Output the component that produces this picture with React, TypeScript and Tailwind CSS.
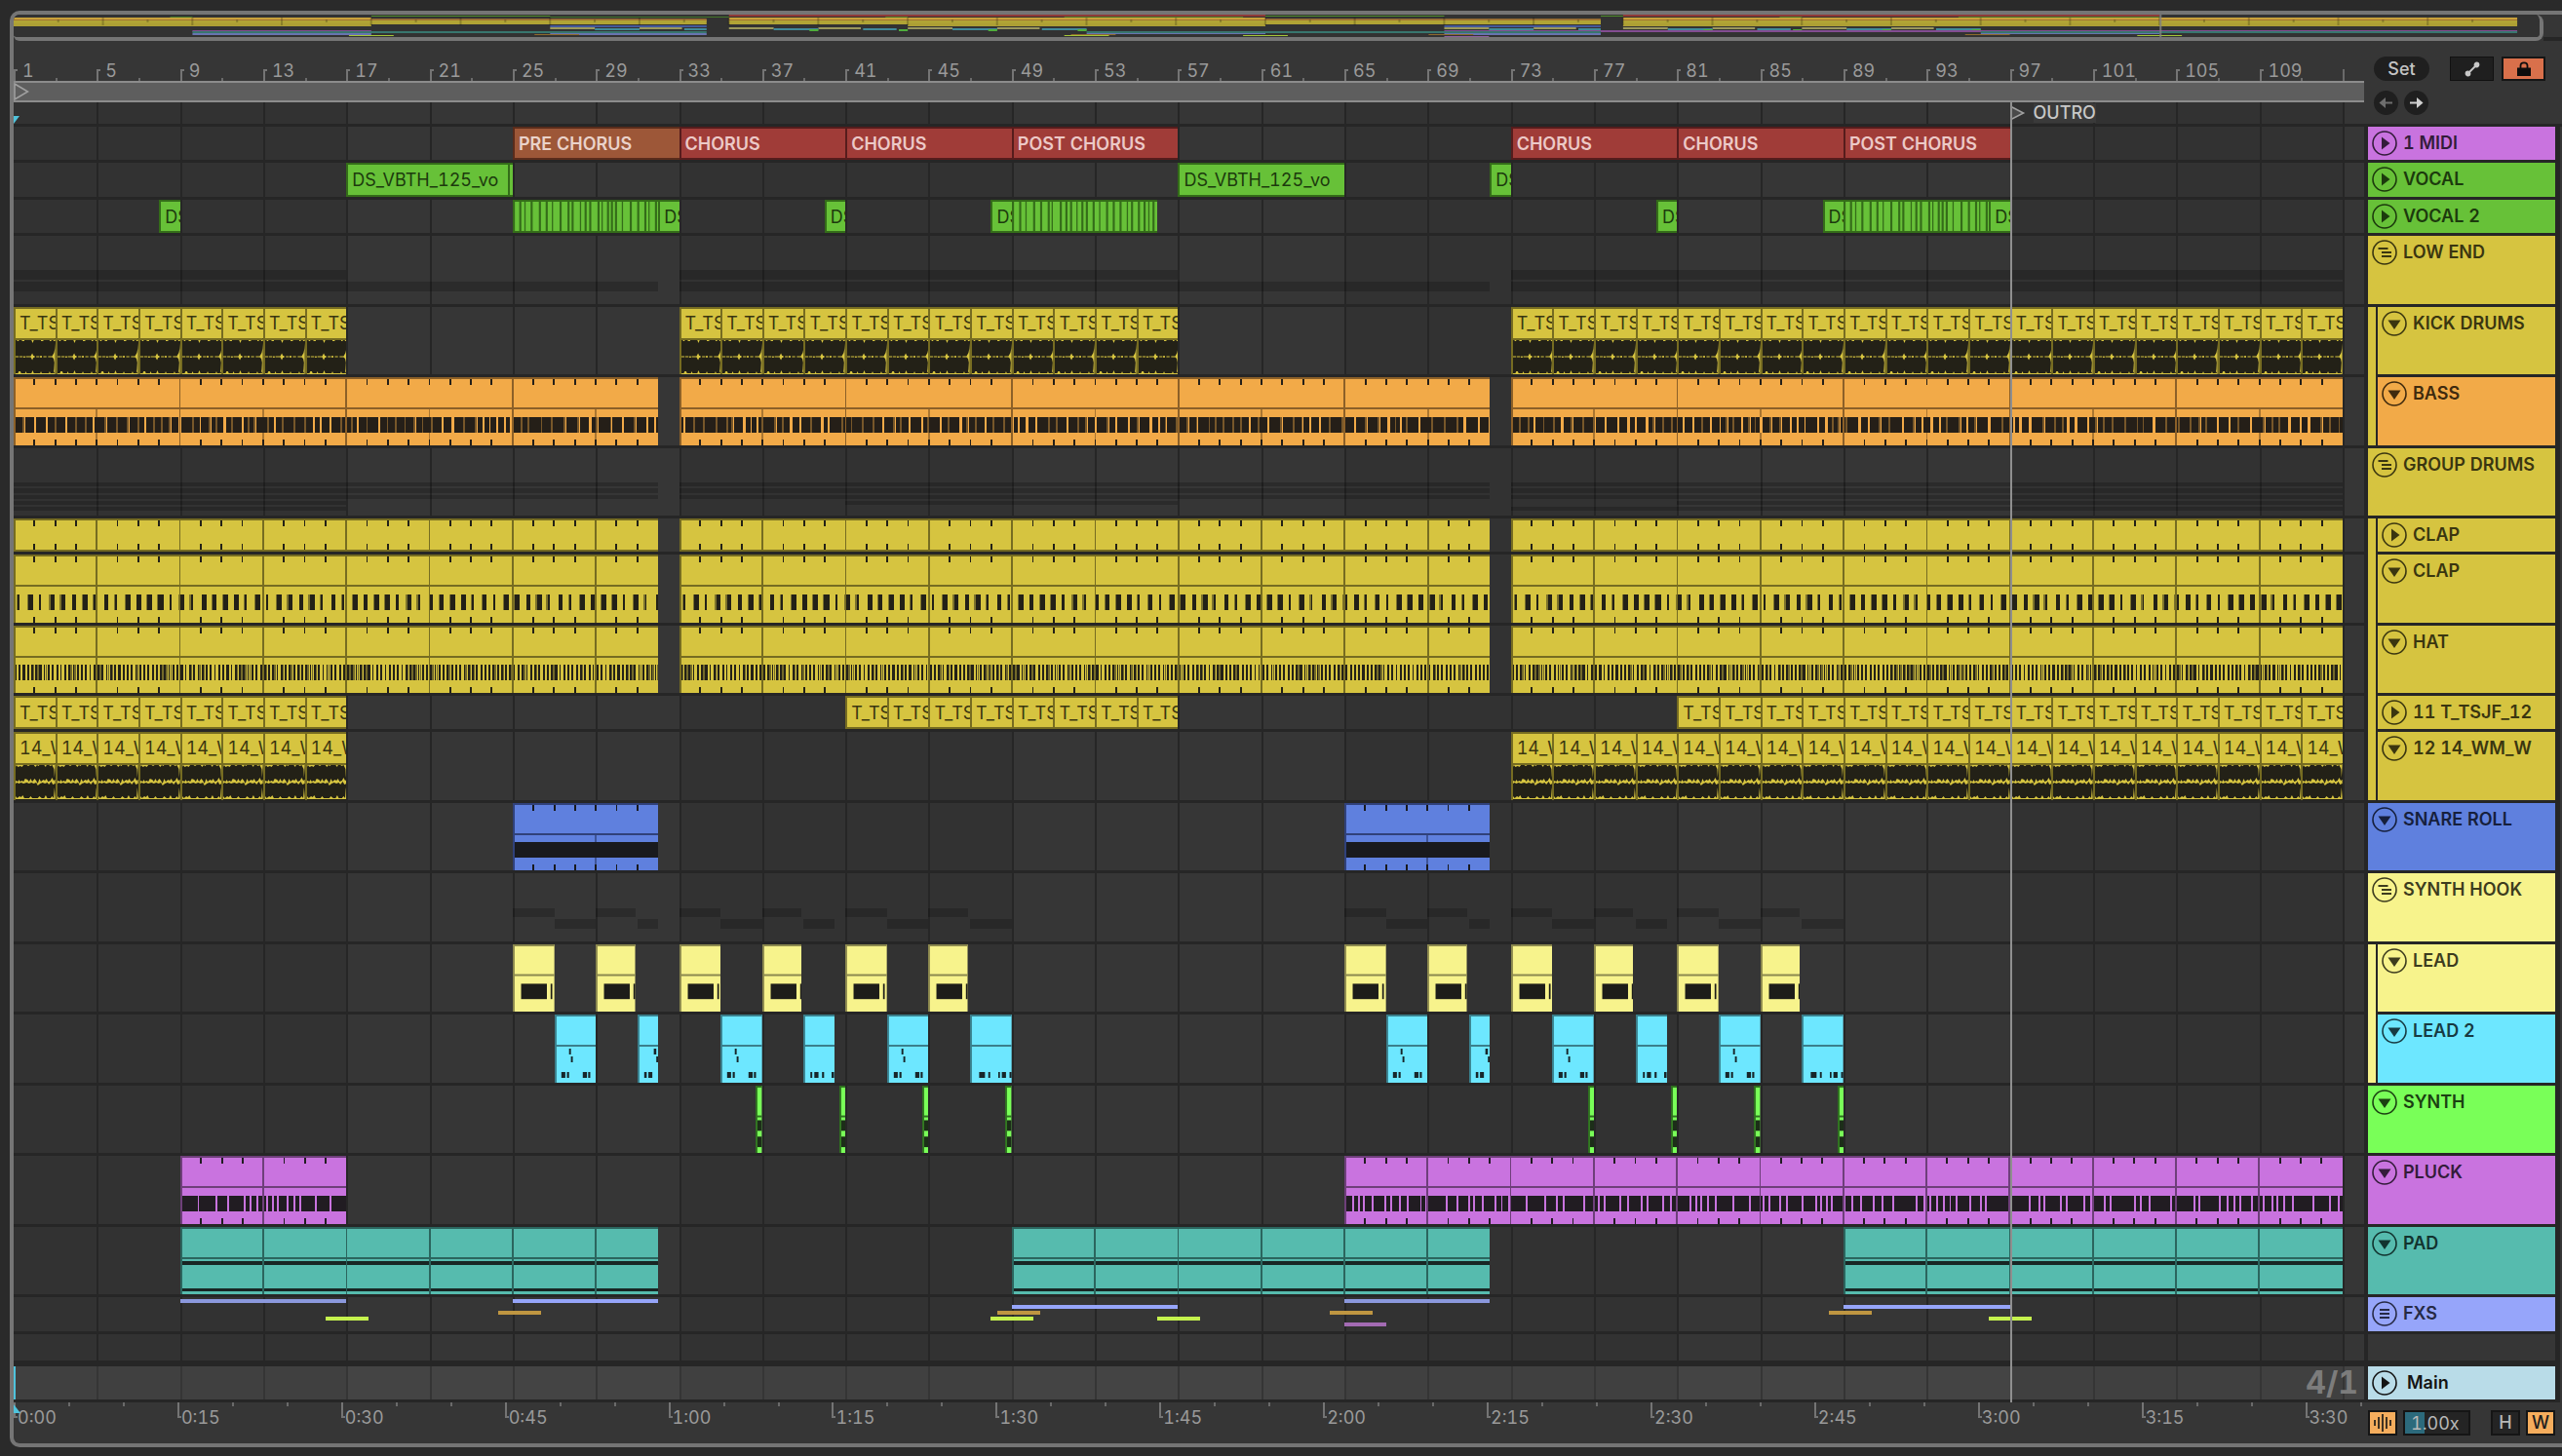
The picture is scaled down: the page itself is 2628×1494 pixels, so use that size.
import React from "react";

const SPAN = 113.04;
const SECONDS = 215.4;
const OVERVIEW_SPAN = 113;

const at = (bar: number) => `${((bar - 1) / SPAN) * 100}%`;
const wide = (bars: number) => `${(bars / SPAN) * 100}%`;

type Range = [number, number];
type Tone = "yellow" | "orange" | "green" | "blue" | "cream" | "cyan" | "lime" | "violet" | "teal" | "rust" | "red";

const TONES: Record<Tone, { clip: string; fill: string; dark: string; note: string }> = {
  yellow: { clip: "bg-[#d6c440] border-[#766c21] text-[#3a3610]", fill: "#d6c440", dark: "#766c21", note: "#232117" },
  orange: { clip: "bg-[#f2aa48] border-[#8c6028] text-[#3f2a0e]", fill: "#f2aa48", dark: "#8c6028", note: "#251f18" },
  green: { clip: "bg-[#67c138] border-[#346c19] text-[#1c3a0d]", fill: "#67c138", dark: "#346c19", note: "#1c3a0d" },
  blue: { clip: "bg-[#5f80de] border-[#30417a] text-[#161f3c]", fill: "#5f80de", dark: "#30417a", note: "#191a1e" },
  cream: { clip: "bg-[#f7f38c] border-[#8b884e] text-[#3d3c1e]", fill: "#f7f38c", dark: "#8b884e", note: "#1d1d19" },
  cyan: { clip: "bg-[#6de7ff] border-[#3a7f8c] text-[#173a42]", fill: "#6de7ff", dark: "#3a7f8c", note: "#17262a" },
  lime: { clip: "bg-[#79ff58] border-[#2f7020] text-[#1b4012]", fill: "#79ff58", dark: "#2f7020", note: "#1c2e18" },
  violet: { clip: "bg-[#c973df] border-[#6e3f7a] text-[#331c3a]", fill: "#c973df", dark: "#6e3f7a", note: "#211c22" },
  teal: { clip: "bg-[#56bbae] border-[#2b655e] text-[#12332f]", fill: "#56bbae", dark: "#2b655e", note: "#182624" },
  rust: { clip: "bg-[#9d5738] border-[#5a2c1b] text-[#ead2ca]", fill: "#9d5738", dark: "#5a2c1b", note: "#000" },
  red: { clip: "bg-[#a03c38] border-[#561c1c] text-[#ecc9c7]", fill: "#a03c38", dark: "#561c1c", note: "#000" },
};

function sequence(seed: number) {
  let s = seed;
  return () => {
    s = (s * 1103515245 + 12345) % 2147483648;
    return s / 2147483648;
  };
}

/* ---------- clips ---------- */

function Clip({ from, to, tone, label, children }: { from: number; to: number; tone: Tone; label?: string; children?: React.ReactNode }) {
  return (
    <div
      className={`absolute inset-y-0 overflow-hidden border-t-2 border-l-2 ${TONES[tone].clip}`}
      style={{ left: at(from), width: wide(to - from) }}
    >
      {label && <div className="h-[30px] whitespace-nowrap pl-1 text-lg leading-[30px]">{label}</div>}
      {children}
    </div>
  );
}

function LabelClip({ from, to, tone, label, bold }: { from: number; to: number; tone: Tone; label?: string; bold?: boolean }) {
  return (
    <div
      className={`absolute inset-y-0 overflow-hidden border-y-2 border-l-2 ${bold ? "font-semibold" : ""} ${TONES[tone].clip}`}
      style={{ left: at(from), width: wide(to - from) }}
    >
      <div className="whitespace-nowrap pl-1 text-lg leading-8">{label}</div>
    </div>
  );
}

function Slices({ from, to, seed }: { from: number; to: number; seed: number }) {
  const next = sequence(seed);
  const lines: number[] = [];
  for (let x = 0; x < (to - from) * 100; ) {
    lines.push(x);
    x += 18 + next() * 22;
  }
  return (
    <div className="absolute inset-y-0 border-y-2 border-[#346c19] bg-[#67c138]" style={{ left: at(from), width: wide(to - from) }}>
      <svg className="block h-full w-full" viewBox={`0 0 ${(to - from) * 100} 30`} preserveAspectRatio="none" aria-hidden="true">
        {lines.map((x, i) => (
          <rect key={i} x={x} y="0" width={i % 4 === 2 ? 6 : 10} height="30" fill="#346c19" />
        ))}
      </svg>
    </div>
  );
}

type Pattern = "bass" | "clap" | "hat" | "solid" | "pluck";

function patternNotes(kind: Pattern, bars: number, seed: number) {
  const next = sequence(seed);
  const out: [number, number, number][] = [];
  const end = bars * 100;
  if (kind === "clap") {
    for (let x = 20, i = 0; x < end; x += 52, i++) {
      const w = [10, 20, 9, 22, 20, 22, 24][i % 7];
      out.push([x, w, 1]);
      if (i % 3 !== 2) out.push([x - 6, 6, 0.5]);
    }
  } else if (kind === "hat") {
    for (let x = 4; x < end; x += 20) {
      const r = next();
      out.push([x, r > 0.6 ? 10 : 8, 1]);
      if (r < 0.35) out.push([x + 9, 7, 0.55]);
    }
  } else if (kind === "bass") {
    for (let x = 0; x < end; ) {
      const w = 16 + next() * 38;
      out.push([x, w, 1]);
      out.push([x + w, 9, next() > 0.4 ? 0.6 : 0]);
      x += w + 9 + (next() > 0.6 ? 4 : 0);
    }
  } else if (kind === "pluck") {
    for (let x = 0; x < end; ) {
      const w = 14 + next() * next() * 120;
      out.push([x, w, 1]);
      x += w + 9;
    }
  } else {
    out.push([0, end, 1]);
  }
  return out;
}

function MidiClip({ from, to, tone, kind, segment, seed, short }: { from: number; to: number; tone: Tone; kind?: Pattern; segment: number; seed: number; short?: boolean }) {
  const t = TONES[tone];
  const bars = to - from;
  const h = short ? 34 : 70;
  const ticks: number[] = [];
  for (let b = 1; b < bars; b++) if (b % segment !== 0) ticks.push(b);
  const splits: number[] = [];
  for (let b = segment; b < bars; b += segment) splits.push(b);
  const halves: number[] = [];
  for (let b = 4; b < bars; b += 4) if (b % segment !== 0) halves.push(b);
  return (
    <div className="absolute inset-y-0" style={{ left: at(from), width: wide(bars) }}>
      <svg className="block h-full w-full" viewBox={`0 0 ${bars * 100} ${h}`} preserveAspectRatio="none" shapeRendering="crispEdges" aria-hidden="true">
        <rect width={bars * 100} height={h} fill={t.fill} />
        {!short && <rect y="31" width={bars * 100} height="2" fill={t.dark} />}
        {halves.map((b) => (
          <rect key={b} x={b * 100 - 5} y="33" width="9" height="37" fill={t.dark} opacity="0.7" />
        ))}
        {kind && <rect y="41" width={bars * 100} height="16" fill={t.fill} />}
        {kind &&
          patternNotes(kind, bars, seed).map(([x, w, o], i) => (
            <rect key={i} x={x} y="41" width={Math.min(w, bars * 100 - x)} height="16" fill={t.note} opacity={o} />
          ))}
        {splits.map((b) => (
          <rect key={b} x={b * 100 - 5} y="0" width="9" height={h} fill={t.dark} />
        ))}
        {ticks.map((b) => (
          <g key={b} fill={t.note}>
            <rect x={b * 100 - 5} y="2" width="9" height="6" />
            <rect x={b * 100 - 5} y={short ? 26 : 64} width="9" height="6" />
          </g>
        ))}
        <rect width={bars * 100} height="2" fill={t.dark} />
        {short && <rect y="32" width={bars * 100} height="2" fill={t.dark} />}
        <rect width="9" height={h} fill={t.dark} />
      </svg>
    </div>
  );
}

const KICK_WAVE =
  "M0 17.5H8V18.5H0ZM10 17.5H18V18.5H10ZM20 17.5H24V19H20ZM26 17.5H38L42 14.5L45 17H48V19H45L42 21.5L38 18.5H26ZM52 17.5H60V18.5H52ZM62 17H66V19H62ZM70 17.5H78V18.5H70ZM82 17.5H92L97 14L99 10L100 4V36H99L97 33L95 36L97 31L98 24L96 20L92 18.5H82ZM0 0H100V2H96L95 1H90V2H86V1H70V2H64V1H46L43 4L40 1H22V2H16V1H8V2H4V1H0ZM0 35H6L8 33H12L14 35H24L26 33L28 35H40L43 32L46 35H62L64 33L66 35H84L86 33L88 35H100V36H0Z";
const LOOP_WAVE =
  "M0 17L6 18L8 16L12 18L16 17L20 18L24 15L30 16L34 18L38 15L42 18L48 15L52 17L56 20L60 15L64 18L70 16L74 17L78 15L82 18L88 17L92 14L96 17L100 16V20L94 21L90 18L84 21L80 19L74 20L68 19L62 20L56 22L52 19L46 20L40 19L34 20L28 19L20 20L14 19L8 20L4 19L0 20ZM0 0H100V2L98 14L97 5L92 1L88 2L84 1H78L76 3L72 1H60L58 2L54 1L50 3L46 1H36L32 2L28 1H20L16 3L12 2L6 3L2 1L0 3ZM0 36V33L4 35L10 33L14 34L18 32L22 35H34L38 33L42 35H56L60 33L66 35H72L76 32L80 35H88L92 33L96 35L98 24L100 34V36Z";

function WaveClips({ ranges, label, wave, flat }: { ranges: Range[]; label: string; wave?: string; flat?: boolean }) {
  const cells: number[] = [];
  ranges.forEach(([a, b]) => {
    for (let x = a; x < b; x += 2) cells.push(x);
  });
  return (
    <>
      {cells.map((bar) =>
        flat ? (
          <LabelClip key={bar} from={bar} to={bar + 2} tone="yellow" label={label} />
        ) : (
          <Clip key={bar} from={bar} to={bar + 2} tone="yellow" label={label}>
            <svg className="block h-[38px] w-full bg-[#232117]" viewBox="0 0 100 38" preserveAspectRatio="none" aria-hidden="true">
              <path d={wave} fill="#d6c440" transform="translate(0 1)" />
              <rect width="100" height="2" fill="#766c21" />
            </svg>
          </Clip>
        ),
      )}
    </>
  );
}

type Note = [number, number, number, number];

function NoteClip({ from, to, tone, notes }: { from: number; to: number; tone: Tone; notes: Note[] }) {
  const t = TONES[tone];
  const bars = to - from;
  return (
    <div className="absolute inset-y-0" style={{ left: at(from), width: wide(bars) }}>
      <svg className="block h-full w-full" viewBox={`0 0 ${bars * 100} 70`} preserveAspectRatio="none" aria-hidden="true">
        <rect width={bars * 100} height="70" fill={t.fill} />
        <rect y="31" width={bars * 100} height="2" fill={t.dark} />
        {notes.map(([a, b, y, h], i) => (
          <rect key={i} x={a} y={y} width={b - a} height={h} fill={t.note} />
        ))}
        <rect width={bars * 100} height="2" fill={t.dark} />
        <rect width="9" height="70" fill={t.dark} />
      </svg>
    </div>
  );
}

const LEAD_NOTES: Note[] = [
  [40, 164, 41, 16],
  [182, 190, 41, 16],
];
const LEAD2_A: Note[] = [
  [69, 78, 35, 6],
  [78, 87, 43, 6],
  [32, 51, 59, 6],
  [59, 69, 59, 6],
  [135, 155, 59, 6],
  [161, 171, 59, 6],
];
const LEAD2_B: Note[] = [
  [78, 90, 35, 6],
  [90, 100, 43, 6],
  [32, 44, 59, 6],
  [52, 71, 59, 6],
];
const LEAD2_C: Note[] = [
  [34, 43, 59, 6],
  [53, 73, 59, 6],
  [90, 100, 59, 6],
  [136, 148, 59, 6],
];
const LEAD2_D: Note[] = [
  [44, 72, 59, 6],
  [88, 97, 59, 6],
  [136, 144, 59, 6],
  [153, 173, 59, 6],
  [190, 200, 59, 6],
];
const SYNTH_NOTES: Note[] = [
  [9, 30, 36, 11],
  [9, 30, 53, 11],
];

function PadClip({ from, to }: { from: number; to: number }) {
  const t = TONES.teal;
  const bars = to - from;
  const lines: number[] = [];
  for (let b = 4; b < bars; b += 4) lines.push(b);
  return (
    <div className="absolute inset-y-0" style={{ left: at(from), width: wide(bars) }}>
      <svg className="block h-full w-full" viewBox={`0 0 ${bars * 100} 69`} preserveAspectRatio="none" shapeRendering="crispEdges" aria-hidden="true">
        <rect width={bars * 100} height="69" fill={t.fill} />
        <rect y="31" width={bars * 100} height="2" fill={t.dark} />
        <rect y="35" width={bars * 100} height="4" fill={t.note} />
        <rect y="63" width={bars * 100} height="3" fill={t.note} />
        {lines.map((b) => (
          <rect key={b} x={b * 100 - 5} width="9" height="69" fill={t.dark} />
        ))}
        <rect width={bars * 100} height="2" fill={t.dark} />
        <rect width="9" height="69" fill={t.dark} />
      </svg>
    </div>
  );
}

function Shadow({ ranges, top, tall }: { ranges: Range[]; top: string; tall: string }) {
  return (
    <>
      {ranges.map(([a, b]) => (
        <div key={a} className={`absolute bg-black/20 ${top} ${tall}`} style={{ left: at(a), width: wide(b - a) }} />
      ))}
    </>
  );
}

function Dash({ from, to, look }: { from: number; to: number; look: string }) {
  return <div className={`absolute h-1 ${look}`} style={{ left: at(from), width: wide(to - from) }} />;
}

/* ---------- arrangement data ---------- */

const FULL: Range[] = [[1, 32], [33, 72], [73, 113]];
const KICK: Range[] = [[1, 17], [33, 57], [73, 113]];
const TSJF: Range[] = [[1, 17], [41, 57], [81, 113]];
const WM: Range[] = [[1, 17], [73, 113]];
const LEAD: Range[] = [25, 29, 33, 37, 41, 45, 65, 69, 73, 77, 81, 85].map((b) => [b, b + (b % 8 === 5 ? 1.9 : 2)] as Range);
const LEAD2: [number, number, Note[]][] = [
  [27, 29, LEAD2_A],
  [31, 32, LEAD2_B],
  [35, 37, LEAD2_A],
  [39, 40.5, LEAD2_C],
  [43, 45, LEAD2_A],
  [47, 49, LEAD2_D],
  [67, 69, LEAD2_A],
  [71, 72, LEAD2_B],
  [75, 77, LEAD2_A],
  [79, 80.5, LEAD2_C],
  [83, 85, LEAD2_A],
  [87, 89, LEAD2_D],
];
const SYNTH = [37, 41, 45, 49, 77, 81, 85, 89];
const PLUCK: Range[] = [[9, 17], [65, 113]];
const PAD: Range[] = [[9, 32], [49, 72], [89, 113]];
const SECTIONS: [number, number, Tone, string][] = [
  [25, 33, "rust", "PRE CHORUS"],
  [33, 41, "red", "CHORUS"],
  [41, 49, "red", "CHORUS"],
  [49, 57, "red", "POST CHORUS"],
  [73, 81, "red", "CHORUS"],
  [81, 89, "red", "CHORUS"],
  [89, 97, "red", "POST CHORUS"],
];

const midiRow = (tone: Tone, ranges: Range[], segment: number, kind?: Pattern, short?: boolean) =>
  ranges.map(([a, b]) => <MidiClip key={a} from={a} to={b} tone={tone} segment={segment} kind={kind} seed={a * 37 + 11} short={short} />);

type Fold = "closed" | "open" | "group" | "list";
type Track = { name: string; size: string; head: string; fold: Fold; nested?: string; content: React.ReactNode };

const YELLOW = "bg-[#d6c440] text-[#3a3610]";
const TRACKS: Track[] = [
  {
    name: "1 MIDI", size: "h-[37px]", head: "bg-[#c973df] text-[#331c3a]", fold: "closed",
    content: SECTIONS.map(([a, b, tone, label]) => <LabelClip key={a} from={a} to={b} tone={tone} label={label} bold />),
  },
  {
    name: "VOCAL", size: "h-[38px]", head: "bg-[#67c138] text-[#1c3a0d]", fold: "closed",
    content: (
      <>
        <LabelClip from={17} to={24.75} tone="green" label="DS_VBTH_125_vo" />
        <LabelClip from={24.75} to={25} tone="green" />
        <LabelClip from={57} to={65} tone="green" label="DS_VBTH_125_vo" />
        <LabelClip from={72} to={73} tone="green" label="DS" />
      </>
    ),
  },
  {
    name: "VOCAL 2", size: "h-[37px]", head: "bg-[#67c138] text-[#1c3a0d]", fold: "closed",
    content: (
      <>
        <Slices from={25} to={32} seed={7} />
        <Slices from={49} to={56} seed={19} />
        <Slices from={89} to={96} seed={7} />
        {[8, 32, 40, 48, 80, 88, 96].map((b) => (
          <LabelClip key={b} from={b} to={b + 1} tone="green" label="DS" />
        ))}
      </>
    ),
  },
  {
    name: "LOW END", size: "h-[73px]", head: YELLOW, fold: "group",
    content: (
      <>
        <Shadow ranges={KICK} top="top-[35px]" tall="h-[10px]" />
        <Shadow ranges={FULL} top="top-[47px]" tall="h-[10px]" />
      </>
    ),
  },
  { name: "KICK DRUMS", size: "h-[72px]", head: YELLOW, fold: "open", nested: "bg-[#d6c440]", content: <WaveClips ranges={KICK} label="T_TS" wave={KICK_WAVE} /> },
  { name: "BASS", size: "h-[73px]", head: "bg-[#f2aa48] text-[#3f2a0e]", fold: "open", nested: "bg-[#d6c440]", content: midiRow("orange", FULL, 8, "bass") },
  {
    name: "GROUP DRUMS", size: "h-[72px]", head: YELLOW, fold: "group",
    content: (
      <>
        <Shadow ranges={FULL} top="top-[35px]" tall="h-1" />
        <Shadow ranges={FULL} top="top-[41px]" tall="h-[5px]" />
        <Shadow ranges={FULL} top="top-[48px]" tall="h-1" />
        <Shadow ranges={TSJF} top="top-[54px]" tall="h-1" />
        <Shadow ranges={WM} top="top-[60px]" tall="h-1" />
      </>
    ),
  },
  { name: "CLAP", size: "h-[37px]", head: YELLOW, fold: "closed", nested: "bg-[#d6c440]", content: midiRow("yellow", FULL, 4, undefined, true) },
  { name: "CLAP", size: "h-[73px]", head: YELLOW, fold: "open", nested: "bg-[#d6c440]", content: midiRow("yellow", FULL, 4, "clap") },
  { name: "HAT", size: "h-[72px]", head: YELLOW, fold: "open", nested: "bg-[#d6c440]", content: midiRow("yellow", FULL, 4, "hat") },
  { name: "11 T_TSJF_12", size: "h-[37px]", head: YELLOW, fold: "closed", nested: "bg-[#d6c440]", content: <WaveClips ranges={TSJF} label="T_TS" flat /> },
  { name: "12 14_WM_W", size: "h-[73px]", head: YELLOW, fold: "open", nested: "bg-[#d6c440]", content: <WaveClips ranges={WM} label="14_W" wave={LOOP_WAVE} /> },
  { name: "SNARE ROLL", size: "h-[72px]", head: "bg-[#5f80de] text-[#161f3c]", fold: "open", content: midiRow("blue", [[25, 32], [65, 72]], 8, "solid") },
  {
    name: "SYNTH HOOK", size: "h-[73px]", head: "bg-[#f7f38c] text-[#3d3c1e]", fold: "group",
    content: (
      <>
        <Shadow ranges={LEAD} top="top-[36px]" tall="h-[9px]" />
        <Shadow ranges={LEAD2.map(([a, b]) => [a, b] as Range)} top="top-[47px]" tall="h-[10px]" />
      </>
    ),
  },
  {
    name: "LEAD", size: "h-[72px]", head: "bg-[#f7f38c] text-[#3d3c1e]", fold: "open", nested: "bg-[#f7f38c]",
    content: LEAD.map(([a, b]) => <NoteClip key={a} from={a} to={b} tone="cream" notes={LEAD_NOTES} />),
  },
  {
    name: "LEAD 2", size: "h-[73px]", head: "bg-[#6de7ff] text-[#173a42]", fold: "open", nested: "bg-[#f7f38c]",
    content: LEAD2.map(([a, b, notes]) => <NoteClip key={a} from={a} to={b} tone="cyan" notes={notes} />),
  },
  {
    name: "SYNTH", size: "h-[72px]", head: "bg-[#79ff58] text-[#1b4012]", fold: "open",
    content: SYNTH.map((b) => <NoteClip key={b} from={b - 0.3} to={b} tone="lime" notes={SYNTH_NOTES} />),
  },
  { name: "PLUCK", size: "h-[73px]", head: "bg-[#c973df] text-[#331c3a]", fold: "open", content: midiRow("violet", PLUCK, 4, "pluck") },
  { name: "PAD", size: "h-[72px]", head: "bg-[#56bbae] text-[#12332f]", fold: "open", content: PAD.map(([a, b]) => <PadClip key={a} from={a} to={b} />) },
  {
    name: "FXS", size: "h-[38px]", head: "bg-[#96a5fa] text-[#262a45]", fold: "list",
    content: (
      <>
        <Dash from={9} to={17} look="top-[2px] bg-[#8b98dd]" />
        <Dash from={25} to={32} look="top-[2px] bg-[#96a5fa]" />
        <Dash from={65} to={72} look="top-[2px] bg-[#8b98dd]" />
        <Dash from={49} to={57} look="top-2 bg-[#96a5fa]" />
        <Dash from={89} to={97} look="top-2 bg-[#96a5fa]" />
        {[24.3, 48.3, 64.3, 88.3].map((b) => (
          <Dash key={b} from={b} to={b + 2.05} look="top-[14px] bg-[#bf9641]" />
        ))}
        {[16, 48, 56, 96].map((b) => (
          <Dash key={b} from={b} to={b + 2.05} look="top-5 bg-[#c5f24d]" />
        ))}
        <Dash from={65} to={67} look="top-[26px] bg-[#a36bb3]" />
      </>
    ),
  },
];

/* ---------- rulers, overview, grid ---------- */

function Overview() {
  const put = (ranges: Range[], y: number, h: number, fill: string) =>
    ranges.map(([a, b]) => <rect key={`${a}-${y}`} x={a - 1} y={y} width={b - a} height={h} fill={fill} />);
  const marks: number[] = [];
  for (let b = 2; b < 112; b += 2) marks.push(b);
  return (
    <svg className="block h-[23px] w-full bg-[#323232]" viewBox={`0 0 ${OVERVIEW_SPAN} 23`} preserveAspectRatio="none" role="img" aria-label="Arrangement overview">
      {put([[33, 57], [73, 97]], 0, 2, "#8f3a37")}
      {put([[17, 25], [57, 65], [72, 73]], 1, 1, "#4f8c2c")}
      {put([[8, 9], [25, 33], [40, 41], [48, 56], [80, 81], [88, 97]], 2, 1, "#43762a")}
      {put([[1, 17], [33, 57], [73, 113]], 3, 2, "#c9a23a")}
      {put([[17, 32], [57, 72]], 4, 2, "#8f6a34")}
      {put(FULL, 5, 2, "#a37432")}
      {put(FULL, 6, 4, "#b1a435")}
      {put([[1, 17], [41, 57], [73, 113]], 9, 3, "#ad9f34")}
      {put([[25, 32], [65, 72]], 11, 2, "#45599a")}
      {put(LEAD, 13, 2, "#9a975c")}
      {put(LEAD2.map(([a, b]) => [a, b] as Range), 14, 2, "#42899a")}
      {put(SYNTH.map((b) => [b - 0.4, b] as Range), 15, 2, "#4fae3c")}
      {put(PLUCK, 16, 2, "#834d91")}
      {put(PAD, 17, 2, "#38766e")}
      {put([[9, 17], [25, 32], [65, 72]], 19, 2, "#6874b0")}
      {put([[49, 57], [89, 97]], 19, 1, "#6874b0")}
      {put([[24.3, 26.3], [48.3, 50.3], [64.3, 66.3], [88.3, 90.3]], 20, 1, "#8d6a2d")}
      {put([[16, 18], [48, 50], [56, 58], [96, 98]], 21, 1, "#a5c738")}
      {put([[65, 67]], 22, 1, "#8f5f9e")}
      {marks.map((b) => (
        <rect key={b} x={b - 0.05} y={b % 4 ? 5 : 3} width="0.09" height={b % 4 ? 3 : 8} fill="#000" opacity="0.2" />
      ))}
      <rect x="96" y="0" width="0.09" height="23" fill="#858585" opacity="0.8" />
    </svg>
  );
}

function BarRuler() {
  const majors: number[] = [];
  for (let b = 1; b <= 109; b += 4) majors.push(b);
  return (
    <div className="relative h-[41px] overflow-hidden text-lg leading-5 text-[#9a9a9a]">
      {majors.map((b) => (
        <React.Fragment key={b}>
          <div className="absolute bottom-0 h-3 w-1 border-t-2 border-l-2 border-[#747474]" style={{ left: at(b) }} />
          <span className="absolute bottom-0 pl-[9px]" style={{ left: at(b) }}>{b}</span>
          <div className="absolute bottom-0 h-[3px] w-0.5 bg-[#6a6a6a]" style={{ left: at(b + 2) }} />
        </React.Fragment>
      ))}
      <div className="absolute bottom-0 h-3 w-0.5 bg-[#6a6a6a]" style={{ left: at(113) }} />
    </div>
  );
}

function TimeRuler() {
  const marks: number[] = [];
  for (let s = 0; s <= 215; s += 5) marks.push(s);
  return (
    <div className="relative h-[42px] overflow-hidden text-lg leading-5 text-[#9a9a9a]">
      {marks.map((s) =>
        s % 15 === 0 ? (
          <React.Fragment key={s}>
            <div className="absolute top-0 h-4 w-1 border-b-2 border-l-2 border-[#747474]" style={{ left: `${(s / SECONDS) * 100}%` }} />
            <span className="absolute top-1.5 pl-1" style={{ left: `${(s / SECONDS) * 100}%` }}>
              {Math.floor(s / 60)}:{String(s % 60).padStart(2, "0")}
            </span>
          </React.Fragment>
        ) : (
          <div key={s} className="absolute top-0 h-1 w-0.5 bg-[#6a6a6a]" style={{ left: `${(s / SECONDS) * 100}%` }} />
        ),
      )}
      <svg className="absolute top-0.5 left-0 h-2.5 w-2" viewBox="0 0 8 10" aria-hidden="true">
        <path d="M0 0L7 9H0Z" fill="#4fc3dc" />
      </svg>
    </div>
  );
}

function Grid() {
  const lines: number[] = [];
  for (let b = 5; b <= 113; b += 4) lines.push(b);
  return (
    <div className="absolute inset-0 bg-[#363636]">
      {[1, 33, 65, 97].map((b) => (
        <div key={b} className="absolute inset-y-0 bg-[#323232]" style={{ left: at(b), width: wide(16) }} />
      ))}
      {lines.map((b) => (
        <div key={b} className="absolute inset-y-0 w-0.5 bg-[#262626]" style={{ left: at(b) }} />
      ))}
    </div>
  );
}

function FoldIcon({ fold }: { fold: Fold }) {
  return (
    <svg className="size-[26px]" viewBox="0 0 26 26" fill="none" stroke="currentColor" strokeWidth="1.6" aria-hidden="true">
      <circle cx="13" cy="13" r="12" />
      {fold === "closed" && <path d="M10 6.5L18.5 13L10 19.5Z" fill="currentColor" stroke="none" />}
      {fold === "open" && <path d="M6.5 9.5H19.5L13 19Z" fill="currentColor" stroke="none" />}
      {fold === "group" && <path d="M6.5 9H16.5M10 13H20M10 17H20" strokeWidth="1.8" />}
      {fold === "list" && <path d="M8 9H18M8 13H18M8 17H18" strokeWidth="1.8" />}
    </svg>
  );
}

function TrackHead({ track }: { track: Track }) {
  const grouped = track.fold === "group" || track.fold === "list";
  const last = track.name === "BASS" || track.name.startsWith("12 ") || track.name === "LEAD 2";
  return (
    <li className={`flex ${track.size}`}>
      {track.nested && (
        <div className={last ? "flex w-[10px] shrink-0 border-b-[3px] border-[#262626]" : "flex w-[10px] shrink-0"}>
          <div className={`w-2 ${track.nested}`} />
        </div>
      )}
      <div className={`flex min-w-0 flex-1 items-start border-b-[3px] border-[#262626] pl-1 ${track.head}`}>
        <div className="flex h-[34px] items-center gap-1.5">
          <button type="button" aria-label={`Fold ${track.name}`} className="block size-[26px]">
            <FoldIcon fold={track.fold} />
          </button>
          <span className={`text-lg leading-6 whitespace-nowrap ${grouped ? "font-semibold" : "font-semibold"}`}>{track.name}</span>
        </div>
      </div>
    </li>
  );
}

export default function App() {
  return (
    <main className="min-h-screen bg-[#2a2a2a] pt-[11px] pl-[10px] font-['Inter',sans-serif] tabular-nums">
      <div className="overflow-hidden rounded-l-[10px] border-y-4 border-l-4 border-[#757575] bg-[#363636]">
        <div className="flex">
          <div className="min-w-0 flex-1 overflow-hidden rounded-r-[8px] rounded-bl-[6px] border-r-4 border-b-4 border-[#757575]">
            <Overview />
          </div>
          <div className="w-[19px] border-b-4 border-[#262626]" />
        </div>

        <div className="flex">
          <section className="relative min-w-0 flex-1" aria-label="Timeline">
            <BarRuler />
            <div className="h-[22px] border-y-2 border-[#8c8c8c] bg-[#5e5e5e]">
              <svg className="block h-[18px] w-4" viewBox="0 0 16 18" aria-hidden="true">
                <path d="M1 1L14.5 9L1 17Z" fill="none" stroke="#a0a0a0" strokeWidth="1.6" />
              </svg>
            </div>
            <div className="relative">
              <Grid />
              <div className="relative h-[25px] border-b-[3px] border-[#262626]">
                <svg className="absolute top-3.5 left-0 h-2 w-1.5" viewBox="0 0 6 8" aria-hidden="true">
                  <path d="M0 0H6L0 8Z" fill="#4fc3dc" />
                </svg>
                <div className="absolute top-0 flex h-[22px] items-center gap-2" style={{ left: at(97) }}>
                  <svg className="h-4 w-4" viewBox="0 0 16 16" aria-hidden="true">
                    <path d="M1 1.5L13.5 8L1 14.5Z" fill="#4a4a4a" stroke="#a0a0a0" strokeWidth="1.6" />
                  </svg>
                  <span className="bg-[#3a3a3a] text-lg leading-5 font-medium text-[#c8c8c8]">OUTRO</span>
                </div>
              </div>
              {TRACKS.map((track, i) => (
                <div key={i} className={`relative border-b-[3px] border-[#262626] ${track.size}`}>
                  {track.content}
                </div>
              ))}
              <div className="relative h-[33px] border-b-[6px] border-[#262626]" />
              <div className="relative flex h-[37px] items-center justify-end border-b-[3px] border-[#262626] bg-white/7 pr-1.5">
                <div className="absolute inset-y-0 left-0 w-0.5 bg-[#4fc3dc]" />
                <span className="text-[32px] leading-8 font-bold text-[#7c7c7c]">4/1</span>
              </div>
              <div className="absolute inset-y-0 w-0.5 bg-[#8f8f8f]" style={{ left: at(97) }} />
            </div>
            <TimeRuler />
          </section>

          <aside className="flex w-[203px] shrink-0 flex-col">
            <div className="flex h-[88px] flex-col gap-2.5 border-b-[3px] border-[#262626] pt-4 pl-2.5">
              <div className="flex items-center">
                <button type="button" className="h-[25px] w-[57px] rounded-full bg-[#1f1f1f] text-lg leading-[25px] font-medium text-[#c4c4c4]">
                  Set
                </button>
                <button type="button" aria-label="Automation mode" className="ml-[21px] flex h-[25px] w-[45px] items-center justify-center border border-[#111] bg-[#1f1f1f]">
                  <svg className="size-4" viewBox="0 0 16 16" fill="#c8c8c8" stroke="#c8c8c8" strokeWidth="1.8" aria-hidden="true">
                    <path d="M4 12L12 4" />
                    <circle cx="3.5" cy="12.5" r="2" />
                    <circle cx="12.5" cy="3.5" r="2" />
                  </svg>
                </button>
                <button type="button" aria-label="Lock envelopes" className="ml-2 flex h-[25px] w-[45px] items-center justify-center border-2 border-[#151515] bg-[#d9704b]">
                  <svg className="h-4 w-4" viewBox="0 0 16 16" aria-hidden="true">
                    <path d="M4.5 7V4.5C4.5 2.6 6 1.3 8 1.3S11.5 2.6 11.5 4.5V7" fill="none" stroke="#0d0d0d" strokeWidth="1.8" />
                    <rect x="1" y="6.5" width="14" height="8.5" fill="#0d0d0d" />
                  </svg>
                </button>
              </div>
              <div className="flex gap-[6px]">
                <button type="button" aria-label="Previous locator" className="flex size-[25px] items-center justify-center rounded-full bg-[#1f1f1f] text-[#6e6e6e]">
                  <svg className="size-[15px]" viewBox="0 0 15 15" fill="none" stroke="currentColor" strokeWidth="2" aria-hidden="true">
                    <path d="M3 7.5H14" />
                    <path d="M7 2L0.5 7.5L7 13Z" fill="currentColor" stroke="none" />
                  </svg>
                </button>
                <button type="button" aria-label="Next locator" className="flex size-[25px] items-center justify-center rounded-full bg-[#1f1f1f] text-[#d0d0d0]">
                  <svg className="size-[15px]" viewBox="0 0 15 15" fill="none" stroke="currentColor" strokeWidth="2" aria-hidden="true">
                    <path d="M1 7.5H12" />
                    <path d="M8 2L14.5 7.5L8 13Z" fill="currentColor" stroke="none" />
                  </svg>
                </button>
              </div>
            </div>
            <div className="flex border-l-4 border-[#262626]">
              <div className="min-w-0 flex-1">
                <ul className="bg-[#262626]">
                  {TRACKS.map((track, i) => (
                    <TrackHead key={i} track={track} />
                  ))}
                </ul>
                <div className="h-[33px] border-b-[6px] border-[#262626]" />
                <div className="flex h-[37px] items-center gap-2.5 border-b-[3px] border-[#262626] bg-[#b9dce8] pl-1 text-[#141414]">
                  <button type="button" aria-label="Fold Main" className="block size-[26px]">
                    <FoldIcon fold="closed" />
                  </button>
                  <span className="text-lg leading-6 font-semibold">Main</span>
                </div>
              </div>
              <div className="w-[5px] bg-[#262626]" />
              <div className="w-[2px] bg-[#363636]" />
            </div>
            <div className="flex h-[42px] items-start gap-1.5 pt-2 pl-1 text-lg leading-[22px]">
              <button type="button" aria-label="Waveform zoom" className="flex h-[26px] w-[30px] items-center justify-center border-2 border-[#151515] bg-[#f5ad5d]">
                <svg className="h-[18px] w-5" viewBox="0 0 20 18" stroke="#151515" strokeWidth="1.6" aria-hidden="true">
                  <path d="M2 6V12M6 3V15M10 0V18M14 3V15M18 6V12" />
                </svg>
              </button>
              <input
                aria-label="Waveform height"
                defaultValue="1.00x"
                className="h-[26px] w-[69px] border-2 border-[#151515] bg-[linear-gradient(to_right,#2c6a7c_20px,#242424_20px)] pl-1.5 text-[#b8b8b8]"
              />
              <button type="button" className="ml-[15px] h-[26px] w-[30px] border-2 border-[#151515] bg-[#242424] font-medium text-[#b8b8b8]">H</button>
              <button type="button" className="h-[26px] w-[30px] border-2 border-[#151515] bg-[#f5ad5d] font-medium text-[#1d1d1d]">W</button>
            </div>
          </aside>
        </div>
      </div>
    </main>
  );
}
